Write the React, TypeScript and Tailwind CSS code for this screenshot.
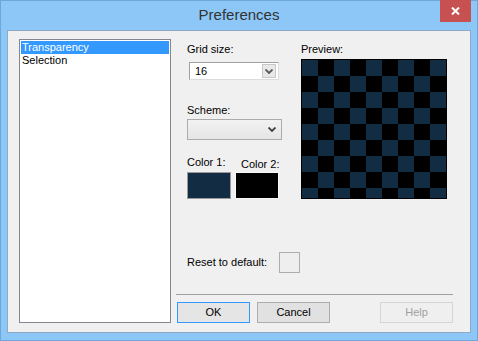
import React from "react";

const BLUE = "bg-[#122c44]";

const Chevron = ({ className }: { className?: string }) => (
  <svg width="8" height="5" viewBox="0 0 8 5" className={className}>
    <path d="M0.5 0.5 L4 4 L7.5 0.5" fill="none" stroke="currentColor" strokeWidth="1.8" />
  </svg>
);

const Checker = () => {
  const cells = [];
  for (let r = 0; r < 9; r++) {
    for (let c = 0; c < 9; c++) {
      cells.push(
        <div key={`${r}-${c}`} className={(r + c) % 2 === 0 ? BLUE : "bg-black"} />
      );
    }
  }
  return (
    <div className="mt-[3px] h-[140px] w-[146px] overflow-hidden border border-black bg-black">
      <div className="grid grid-cols-[repeat(9,16px)] auto-rows-[16px]">{cells}</div>
    </div>
  );
};

const Button = ({
  label,
  className,
}: {
  label: string;
  className: string;
}) => (
  <div
    className={`flex h-[21px] w-[73px] items-center justify-center border ${className}`}
  >
    {label}
  </div>
);

export default function App() {
  return (
    <div
      className="relative flex h-[341px] w-[478px] flex-col border border-[#6fa6d8] bg-[#8cc7f8] text-[11px] leading-[13px] text-black"
      style={{ fontFamily: '"Liberation Sans", Arial, sans-serif' }}
    >
      {/* title bar */}
      <div className="flex h-[29px] shrink-0 items-center justify-center">
        <span className="pb-[1px] text-[15px] leading-[16px] text-[#333]">Preferences</span>
      </div>
      <div className="absolute right-[6px] top-[-1px] flex h-[22px] w-[31px] items-center justify-center bg-[#c75050]">
        <svg width="9" height="8" viewBox="0 0 9 8">
          <path d="M1 0.5 L8 7.5 M8 0.5 L1 7.5" stroke="white" strokeWidth="2" />
        </svg>
      </div>

      {/* client area */}
      <div className="mx-[6px] flex h-[303px] border border-[#8fa9c4] bg-[#f0f0f0] pl-[11px] pt-[8px]">
        {/* list box */}
        <div className="h-[284px] w-[152px] border border-[#828790] bg-white p-[1px]">
          <div className="h-[13px] bg-[#3399ff] pl-[1px] text-white">Transparency</div>
          <div className="h-[13px] pl-[1px]">Selection</div>
        </div>

        {/* right side */}
        <div className="ml-[5px] flex h-[284px] w-[277px] flex-col">
          <div className="flex pl-[11px] pt-[4px]">
            <div className="flex w-[93px] flex-col">
              <span>Grid size:</span>
              <div className="ml-[2px] mt-[6px] flex h-[18px] w-[90px] items-center border border-[#a0a0a0] border-b-[#dcdcdc] border-r-[#dcdcdc] bg-white pl-[5px] pr-[2px]">
                <span className="flex-1">16</span>
                <div className="flex h-[14px] w-[14px] items-center justify-center border border-[#c8c8c8] bg-[#e8e8e8] text-[#555]">
                  <Chevron />
                </div>
              </div>
              <span className="mt-[24px]">Scheme:</span>
              <div className="mt-[2px] flex h-[21px] w-[95px] items-center justify-end border border-[#acacac] bg-gradient-to-b from-[#f2f2f2] to-[#e5e5e5] pr-[5px] text-[#404040]">
                <Chevron />
              </div>
              <div className="mt-[16px] flex">
                <span className="w-[54px]">Color 1:</span>
                <span className="mt-[2px]">Color 2:</span>
              </div>
              <div className="mt-[1px] flex gap-[4px]">
                <div className={`h-[27px] w-[44px] border border-[#9a9a9a] ${BLUE}`} />
                <div className="h-[27px] w-[44px] border border-[#f8f8f8] bg-black" />
              </div>
              <div className="mt-[53px] flex w-[113px] items-center justify-between">
                <span>Reset to default:</span>
                <div className="h-[21px] w-[21px] border border-[#adadad] bg-[#eeeeee]" />
              </div>
            </div>
            <div className="ml-[21px] flex flex-col">
              <span>Preview:</span>
              <Checker />
            </div>
          </div>

          <div className="mt-auto h-px w-full bg-[#a0a0a0]" />
          <div className="mt-[7px] flex">
            <Button label="OK" className="ml-[1px] border-[#3399ff] bg-[#e5e5e5]" />
            <Button label="Cancel" className="ml-[7px] border-[#adadad] bg-[#e1e1e1]" />
            <Button label="Help" className="ml-auto border-[#d5d5d5] bg-[#efefef] text-[#a0a0a0]" />
          </div>
        </div>
      </div>
    </div>
  );
}
